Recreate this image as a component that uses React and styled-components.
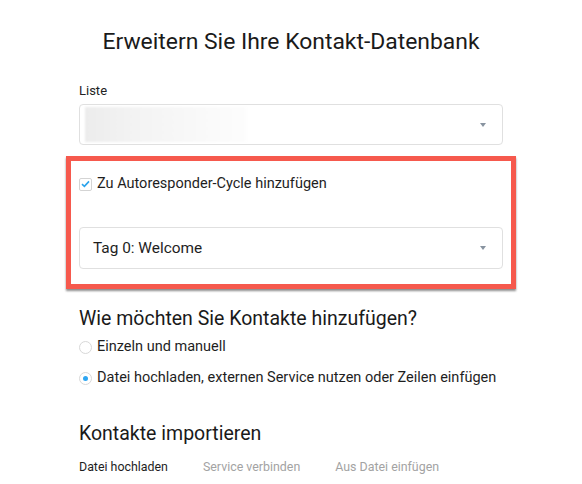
import React from "react";
import styled, { createGlobalStyle } from "styled-components";

const Global = createGlobalStyle`
  html, body { margin: 0; padding: 0; background: #fff; }
  body { font-family: Roboto, "Liberation Sans", Arial, sans-serif; color: #1e1e1e; }
  * { box-sizing: border-box; }
`;

const Page = styled.div`
  width: 424px;
  margin: 0 auto;
  padding-top: 29px;
`;

const Title = styled.h1`
  margin: 0;
  font-size: 22.9px;
  line-height: 26px;
  font-weight: 400;
  text-align: center;
  color: #1a1a1a;
`;

const Label = styled.div`
  margin-top: 28px;
  font-size: 13px;
  line-height: 16px;
  color: #222;
`;

const SelectBox = styled.div`
  margin-top: ${(p) => p.$mt || 0}px;
  height: ${(p) => p.$h || 42}px;
  border: 1px solid #e0e0e0;
  border-radius: 4px;
  display: flex;
  align-items: center;
  padding: 0 16px 0 13px;
  position: relative;
  font-size: 15.4px;
  color: #1e1e1e;
`;

const Blur = styled.div`
  position: absolute;
  left: 5px;
  top: 2px;
  bottom: 2px;
  width: 162px;
  background: linear-gradient(90deg, #ececec 0%, #f3f3f3 30%, #f9f9f9 70%, #fdfdfd 100%);
  filter: blur(1px);
`;

const Value = styled.span`
  flex: 1;
`;

const Caret = styled.span`
  width: 0;
  height: 0;
  border-left: 3.5px solid transparent;
  border-right: 3.5px solid transparent;
  border-top: 4px solid #8893a0;
`;

const Highlight = styled.div`
  margin: 11px -13px 0;
  border: 5px solid #f6594d;
  box-shadow: 0 2px 2px rgba(0, 0, 0, 0.45);
  padding: 15px 8px 15px;
`;

const CheckRow = styled.label`
  display: flex;
  align-items: center;
  gap: 5px;
  font-size: 14.5px;
  line-height: 16px;
  color: #1e1e1e;
`;

const CheckBox = styled.span`
  width: 13px;
  height: 13px;
  border: 1px solid #d4d4d4;
  border-radius: 2px;
  display: flex;
  align-items: center;
  justify-content: center;
  background: #fff;
`;

const SectionTitle = styled.h2`
  margin: ${(p) => p.$mt}px 0 0;
  font-size: 19.5px;
  line-height: 24px;
  font-weight: 400;
  color: #1a1a1a;
`;

const RadioRow = styled.label`
  display: flex;
  align-items: center;
  gap: 5px;
  margin-top: ${(p) => p.$mt}px;
  font-size: 14.5px;
  line-height: 16px;
  color: #1e1e1e;
`;

const Radio = styled.span`
  width: 13px;
  height: 13px;
  border-radius: 50%;
  border: 1px solid #d8d8d8;
  display: flex;
  align-items: center;
  justify-content: center;
  &::after {
    content: "";
    width: 5px;
    height: 5px;
    border-radius: 50%;
    background: ${(p) => (p.$on ? "#2ea6f2" : "transparent")};
  }
`;

const Tabs = styled.div`
  display: flex;
  gap: 35px;
  margin-top: 14px;
`;

const Tab = styled.span`
  font-size: 12.4px;
  line-height: 14px;
  color: ${(p) => (p.$active ? "#1e1e1e" : "#a3a3a3")};
`;

export default function App() {
  return (
    <>
      <Global />
      <Page>
        <Title>Erweitern Sie Ihre Kontakt-Datenbank</Title>
        <Label>Liste</Label>
        <SelectBox $mt={5} $h={41}>
          <Blur />
          <Value />
          <Caret />
        </SelectBox>
        <Highlight>
          <CheckRow>
            <CheckBox>
              <svg width="9" height="8" viewBox="0 0 9 8">
                <path d="M1 4.2 L3.4 6.4 L8 1.4" fill="none" stroke="#2aa3ec" strokeWidth="1.6" />
              </svg>
            </CheckBox>
            Zu Autoresponder-Cycle hinzufügen
          </CheckRow>
          <SelectBox $mt={35} $h={42}>
            <Value>Tag 0: Welcome</Value>
            <Caret />
          </SelectBox>
        </Highlight>
        <SectionTitle $mt={18}>Wie möchten Sie Kontakte hinzufügen?</SectionTitle>
        <RadioRow $mt={8}>
          <Radio />
          Einzeln und manuell
        </RadioRow>
        <RadioRow $mt={15}>
          <Radio $on />
          Datei hochladen, externen Service nutzen oder Zeilen einfügen
        </RadioRow>
        <SectionTitle $mt={36}>Kontakte importieren</SectionTitle>
        <Tabs>
          <Tab $active>Datei hochladen</Tab>
          <Tab>Service verbinden</Tab>
          <Tab>Aus Datei einfügen</Tab>
        </Tabs>
      </Page>
    </>
  );
}
